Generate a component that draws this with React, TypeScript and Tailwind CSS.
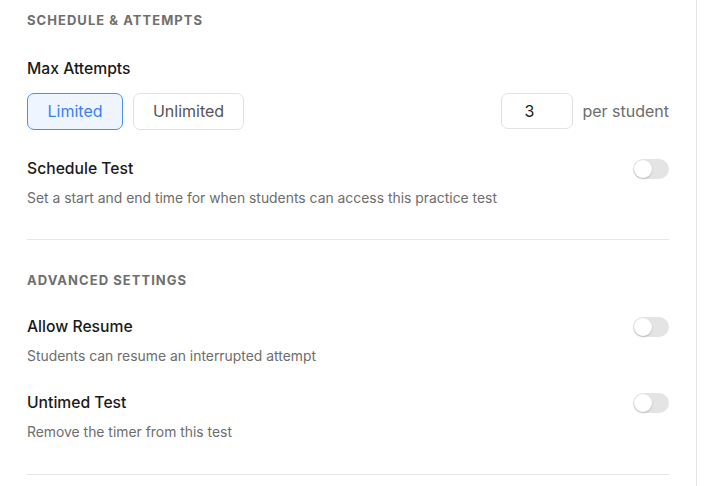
import React, { useState } from "react";

const font = { fontFamily: "Inter, 'Noto Sans', sans-serif" };

const Toggle = ({ on = false }: { on?: boolean }) => (
  <button
    type="button"
    className={`relative h-[20px] w-[36px] shrink-0 rounded-full ${on ? "bg-[#3b7ff2]" : "bg-[#e4e4e4]"}`}
  >
    <span
      className={`absolute top-[1px] h-[18px] w-[18px] rounded-full bg-white shadow-[0_1px_2px_rgba(0,0,0,0.2)] ${on ? "left-[17px]" : "left-[1px]"}`}
    />
  </button>
);

const SectionTitle = ({ children }: { children: React.ReactNode }) => (
  <h3 className="text-[13px] font-bold uppercase tracking-[0.08em] text-[#6f6f6f]">
    {children}
  </h3>
);

const SettingRow = ({ title, hint }: { title: string; hint: string }) => (
  <div className="flex items-start justify-between">
    <div>
      <div className="text-[15.7px] font-medium leading-5 text-[#1a1a1a]">{title}</div>
      <div className="mt-[11px] text-[13.9px] leading-4 text-[#6d6d6d]">{hint}</div>
    </div>
    <Toggle />
  </div>
);

export default function App() {
  const [limited, setLimited] = useState(true);

  return (
    <div className="h-[486px] w-[707px] overflow-hidden bg-white" style={font}>
      <div className="h-full w-[697px] border-r border-[#e6e6e6] px-[27px]">
        <section className="border-b border-[#e6e6e6] pb-[33px] pt-[11px]">
          <SectionTitle>Schedule &amp; Attempts</SectionTitle>

          <div className="mt-[28px] text-[15.7px] font-medium leading-5 text-[#1a1a1a]">Max Attempts</div>
          <div className="mt-[14px] flex items-center justify-between">
            <div className="flex gap-[10px]">
              <button
                type="button"
                onClick={() => setLimited(true)}
                className={`h-[37px] w-[96px] rounded-[7px] border text-[16px] ${limited ? "border-[#4d8ef5] bg-[#eef5ff] text-[#3b7ff2]" : "border-[#e2e2e2] text-[#555]"}`}
              >
                Limited
              </button>
              <button
                type="button"
                onClick={() => setLimited(false)}
                className={`h-[37px] w-[111px] rounded-[7px] border text-[16px] ${!limited ? "border-[#4d8ef5] bg-[#eef5ff] text-[#3b7ff2]" : "border-[#e2e2e2] text-[#555]"}`}
              >
                Unlimited
              </button>
            </div>
            <div className="flex items-center gap-[9px]">
              <input
                defaultValue="3"
                className="h-[36px] w-[72px] rounded-[7px] border border-[#e2e2e2] pl-[22px] text-[16px] text-[#1a1a1a] outline-none"
              />
              <span className="text-[16px] text-[#6d6d6d]">per student</span>
            </div>
          </div>

          <div className="mt-[29px]">
            <SettingRow
              title="Schedule Test"
              hint="Set a start and end time for when students can access this practice test"
            />
          </div>
        </section>

        <section className="border-b border-[#e6e6e6] pb-[34px] pt-[31px]">
          <SectionTitle>Advanced Settings</SectionTitle>
          <div className="mt-[27px] flex flex-col gap-[29px]">
            <SettingRow title="Allow Resume" hint="Students can resume an interrupted attempt" />
            <SettingRow title="Untimed Test" hint="Remove the timer from this test" />
          </div>
        </section>
      </div>
    </div>
  );
}
